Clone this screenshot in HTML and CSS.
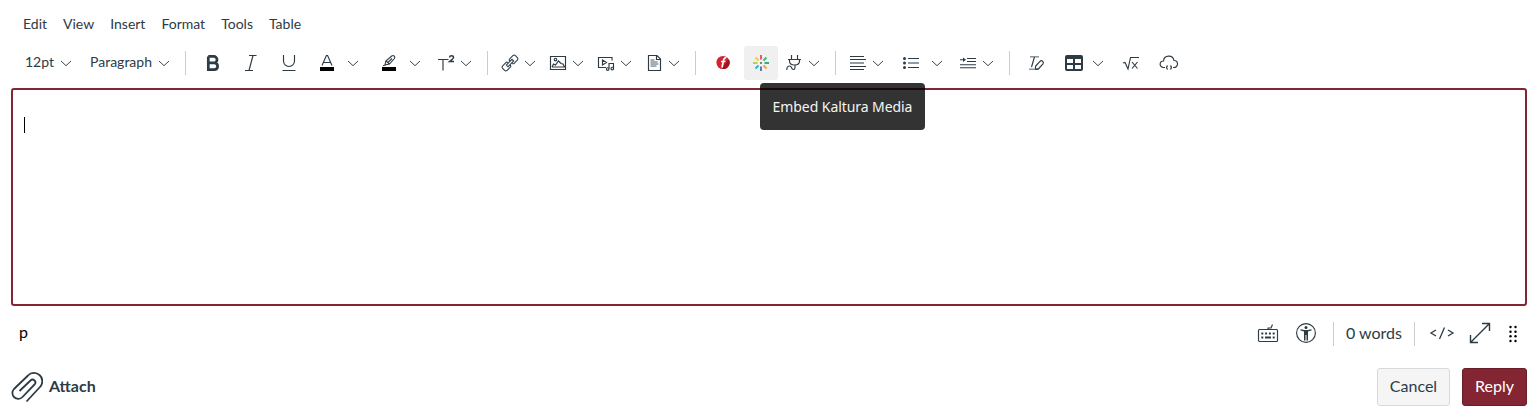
FILE: index.html
```html
<!DOCTYPE html>
<html lang="en">
<head>
<meta charset="utf-8">
<title>Reply editor</title>
<link rel="stylesheet" href="styles.css">
</head>
<body>
<svg class="defs" width="0" height="0"><defs><symbol id="chev" viewBox="0 0 12 20"><path d="M1 8l5 4.700 5-4.700"/></symbol></defs></svg>
<main class="editor">
  <nav class="menubar"><span>Edit</span><span>View</span><span>Insert</span><span>Format</span><span>Tools</span><span>Table</span></nav>
  <div class="toolbar">
    <div class="group group-type">
      <div class="select"><span>12pt</span><svg class="chev"><use href="#chev"/></svg></div>
      <div class="select"><span>Paragraph</span><svg class="chev"><use href="#chev"/></svg></div>
    </div>
    <div class="group group-style">
      <svg class="icon" viewBox="0 0 20 20"><path stroke-width="2.700" d="M5.300 3.400v13.200h6.500a3.400 3.400 0 0 0 0-6.700h-6.500M5.300 3.400h5.500a3.200 3.200 0 0 1 0 6.500"/></svg>
      <svg class="icon" viewBox="0 0 20 20"><path d="M8 2.500h7.500M4 17.500h8M12 2.500l-4 15"/></svg>
      <svg class="icon" viewBox="0 0 20 20"><path d="M4.500 2v6a5.500 5.500 0 0 0 11 0V2M3.500 17.500h13"/></svg>
      <div class="split wide">
        <svg class="icon" viewBox="0 0 20 20"><path d="M5 12.500l4.400-10h1.200l4.400 10M6.500 9.500h7"/><path class="solid black" d="M3 14h14v4H3z"/></svg>
        <svg class="chev"><use href="#chev"/></svg>
      </div>
      <div class="split wide highlight">
        <svg class="icon" viewBox="0 0 20 20"><path stroke-width="1.100" d="M6 12l.8-4 6-5q1.200-1 2.400 0t.2 2.500L10.500 11l-4.500 1M7 8l3.500 3M4 12.800l3-1M9 9.500l4-4"/><path class="solid black" d="M3 14h14v4H3z"/></svg>
        <svg class="chev"><use href="#chev"/></svg>
      </div>
      <div class="split script">
        <svg class="icon" viewBox="0 0 20 20"><path d="M2 6.500h10.500M7 6.500v11"/><path stroke-width="1.500" d="M13.500 4.500q.2-1.700 2-1.700 2 0 2 1.600 0 1-4 4.100H18"/></svg>
        <svg class="chev"><use href="#chev"/></svg>
      </div>
    </div>
    <div class="group group-insert">
      <div class="split">
        <svg class="icon" viewBox="0 0 20 20"><g transform="rotate(-45 10 10) translate(1 1) scale(.9)"><path d="M8.500 8V7.500Q8.500 6.500 7 6.500H2Q0 6.500 0 8.500v3q0 2 2 2h5q1.500 0 1.500-1.500M11.500 8q0-1.500 1.500-1.500h5q2 0 2 2v3q0 2-2 2h-5q-1.500 0-1.500-1.500M5.500 8.700h9v2.600h-9z"/></g></svg>
        <svg class="chev"><use href="#chev"/></svg>
      </div>
      <div class="split">
        <svg class="icon" viewBox="0 0 20 20"><path d="M2.500 3.500h15v13h-15zM4 14h12.500l-1.500-3-2-.5-2.500-2.500-3 4-2-1L4 14"/><circle cx="7.500" cy="6.500" r="1.300"/></svg>
        <svg class="chev"><use href="#chev"/></svg>
      </div>
      <div class="split">
        <svg class="icon" viewBox="0 0 20 20"><path d="M10 14.500H2.500v-10h13.500v3M6.500 7l4 2.500-4 2.500zM13 15.500v-5h4.500v5"/><circle cx="11.700" cy="16" r="1.300"/><circle cx="16.300" cy="15.500" r="1.300"/></svg>
        <svg class="chev"><use href="#chev"/></svg>
      </div>
      <div class="split">
        <svg class="icon" viewBox="0 0 20 20"><path d="M4.500 2.500H13l3.500 3.500v11.500h-12zM12.500 2.500v4h4"/><path class="faint" stroke-width="1.400" d="M6.500 7h4M6.500 9h7M6.500 11h8M6.500 13h6"/></svg>
        <svg class="chev"><use href="#chev"/></svg>
      </div>
    </div>
    <div class="group group-apps">
      <svg class="icon" viewBox="0 0 20 20"><circle cx="10" cy="9.500" r="6.600" fill="#cf2430" stroke="none"/><path d="M16 6.500A6.600 6.600 0 0 1 9 16L13 9z" fill="#9d1620" stroke="none"/><path d="M13.500 4.500Q11 4.500 10.500 7.500L9 14.500M8 8.500h4.500" stroke="#fff" stroke-width="1.700"/></svg>
      <div class="active">
        <svg class="icon" viewBox="0 0 20 20"><g stroke-width="2"><path stroke="#ed5961" d="M10 2v4.500"/><path stroke="#45b87c" d="M12.500 7.500l3-3"/><path stroke="#36ae76" d="M13.500 10H18"/><path stroke="#f6a43a" d="M12.500 12.500l3 3"/><path stroke="#557eb8" d="M10 13.500V18"/><path stroke="#2ab5d2" d="M7.500 12.500l-3 3"/><path stroke="#b5d33e" d="M2 10h4.500"/><path stroke="#f5cf25" d="M7.500 7.500l-3-3"/></g><path class="solid" d="M9.200 9.200h1.600v1.600H9.200z"/></svg>
        <div class="tooltip">Embed Kaltura Media</div>
      </div>
      <div class="split">
        <svg class="icon" viewBox="0 0 20 20"><path d="M7.500 2v4M13.500 2v4M4 6.500h13M5.500 6.500V8q0 4 5 4t5-4V6.500M11 12v2.500q0 2-1.500 2T7.500 14.500q-.5-1.500-2-1.500-2.700 0-2.700 4"/></svg>
        <svg class="chev"><use href="#chev"/></svg>
      </div>
    </div>
    <div class="group group-layout">
      <div class="split">
        <svg class="icon" viewBox="0 0 20 20"><path d="M2 3.500h14M2 6.500h16M2 10h14M2 13.500h16M2 16.500h14"/></svg>
        <svg class="chev"><use href="#chev"/></svg>
      </div>
      <div class="split wide">
        <svg class="icon" viewBox="0 0 20 20"><path d="M7 5.500h11M7 10h11M7 14.500h11"/><g class="solid"><circle cx="3.500" cy="5.500" r="1.500"/><circle cx="3.500" cy="10" r="1.500"/><circle cx="3.500" cy="14.500" r="1.500"/></g></svg>
        <svg class="chev"><use href="#chev"/></svg>
      </div>
      <div class="split indent">
        <svg class="icon" viewBox="0 0 20 20"><path d="M9 5.500h9M9 8.500h9M2 11.700h16M2 14.700h16M2 6.700h5"/><path class="solid" d="M5 4.500l3 2.200L5 9z"/></svg>
        <svg class="chev"><use href="#chev"/></svg>
      </div>
    </div>
    <div class="group group-more">
      <svg class="icon" viewBox="0 0 20 20"><path class="faint" stroke-width="1.500" d="M4 3.800h9M3 16.200h10"/><path d="M8.500 4L5.500 14M9.700 13l4.300-4.700q1.200-1.300 2.600-.1t.4 2.700L12.800 15.500q-1 .8-3 .8-.8-1.800-.1-3.300z"/></svg>
      <div class="split table">
        <svg class="icon" viewBox="0 0 20 20"><rect class="solid" x="1" y="2" width="18" height="16" rx="2"/><path fill="#fff" stroke="none" d="M3 6h6v4H3zM11 6h6v4h-6zM3 12h6v4H3zM11 12h6v4h-6z"/></svg>
        <svg class="chev"><use href="#chev"/></svg>
      </div>
      <svg class="icon" viewBox="0 0 20 20"><path d="M2 10l2-.5 3 6.500 2.500-11.500H18M11 9l5.500 6.500M16.500 9L11 15.500"/></svg>
      <svg class="icon" viewBox="0 0 20 20"><path d="M6 14.500H4.300A3.200 3.200 0 0 1 4.500 8a5.300 5.300 0 0 1 10.500-.5 3.500 3.500 0 0 1 0 7h-1M8.500 12.500q-1.800 2 0 4M11.500 12.500q1.800 2 0 4"/></svg>
    </div>
  </div>
  <div class="textarea"><span class="caret"></span></div>
  <div class="status">
    <span class="path">p</span>
    <div class="tools">
      <svg class="icon large" viewBox="0 0 22 22"><rect x="1.500" y="7.500" width="19" height="12" rx="1"/><path d="M11 7.500V6h3L15.500 2.500"/><path stroke-width="2" stroke-dasharray="2 1.800" d="M4.300 11.500h13.400"/><path stroke-width="2" d="M4.300 15.500h2M8 15.500h6M15.700 15.500h2"/></svg>
      <svg class="icon large" viewBox="0 0 22 22"><circle cx="11" cy="11" r="9.400"/><circle class="solid" cx="11" cy="5.500" r="1.500"/><path class="solid" d="M5.500 7.300l4 .7h3l4-.7v1.300l-3.500 1v9h-1.500V13h-1v5.600H9v-9l-3.500-1z"/></svg>
      <div class="words">0 words</div>
      <svg class="icon code" viewBox="0 0 26 22"><path stroke-width="1.300" d="M7 8L2 11l5 3M19 8l5 3-5 3M15.500 5.500l-5 11.500"/></svg>
      <svg class="icon large" viewBox="0 0 22 22"><path stroke-width="1.400" d="M1.500 20.500L20.500 1.500M13 1.500h7.500V9M1.500 13v7.500H9"/></svg>
      <svg class="icon dots" viewBox="0 0 10 20"><g class="solid black"><circle cx="2.500" cy="4" r="1.200"/><circle cx="7.500" cy="4" r="1.200"/><circle cx="2.500" cy="8.700" r="1.200"/><circle cx="7.500" cy="8.700" r="1.200"/><circle cx="2.500" cy="13.300" r="1.200"/><circle cx="7.500" cy="13.300" r="1.200"/><circle cx="2.500" cy="18" r="1.200"/><circle cx="7.500" cy="18" r="1.200"/></g></svg>
    </div>
  </div>
  <footer class="actions">
    <div class="attach"><svg class="icon clip" viewBox="0 0 32 32"><path stroke-width="1.800" d="M8.500 20L19.500 9.500a2.700 2.700 0 0 1 4 4L11.500 26a5.700 5.700 0 0 1-8.500-8L17 4.500a8 8 0 0 1 12 11.500L15.500 30.500"/></svg><span>Attach</span></div>
    <div class="buttons"><button class="btn cancel">Cancel</button><button class="btn reply">Reply</button></div>
  </footer>
</main>
</body>
</html>
```

FILE: styles.css
```css
* { box-sizing: border-box; }
body { margin: 0; background: #fff; color: #2d3b45; font-family: Lato, sans-serif; font-size: 14px; }
svg { display: block; flex: none; fill: none; stroke: #2d3b45; stroke-width: 1.15; }
.defs { position: absolute; }
.editor { width: 1540px; height: 418px; padding: 12px 13px 0 11px; }
.menubar { display: flex; gap: 16px; height: 24px; padding-left: 12px; line-height: 24px; }
.toolbar { display: flex; height: 52px; padding: 10px 0 8px; }
.group { display: flex; align-items: center; height: 34px; }
.group + .group::before { content: ""; width: 1px; height: 24px; background: #c7cdd1; margin-right: 12px; }
.group-type { width: 174px; padding-left: 14px; gap: 18px; }
.select { display: flex; align-items: center; gap: 6px; }
.select span { line-height: 20px; padding-bottom: 2px; }
.icon { width: 20px; height: 20px; }
.chev { width: 12px; height: 20px; stroke-width: .95; }
.solid { fill: #2d3b45; stroke: none; }
.black { fill: #000; }
.faint { stroke: #8b949a; }
.split { display: flex; gap: 4px; }
.split.wide { gap: 10px; }
.group-style { width: 302px; gap: 18px; }
.group.group-style::before { margin-right: -1px; }
.highlight { margin-left: 2px; }
.script { margin-left: -3px; }
.group-insert { width: 208px; gap: 12px; }
.group.group-insert::before { margin-right: 0; }
.group-apps { width: 140px; }
.group.group-apps::before { margin-right: 17px; }
.active { position: relative; display: flex; align-items: center; justify-content: center; width: 34px; height: 34px; margin: 0 6px 0 11px; background: #f0f0f0; border-radius: 3px; }
.tooltip { position: absolute; z-index: 2; left: 16px; top: 37px; width: 165px; height: 47px; border-radius: 4px; background: rgba(0,0,0,.8); color: #f5f5f5; font: 14px/47px "Noto Sans", sans-serif; letter-spacing: -.07px; text-align: center; white-space: nowrap; }
.group-layout { width: 174px; }
.indent { margin-left: 15px; }
.group-layout .wide { margin-left: 17px; }
.group-more { gap: 18px; }
.group.group-more::before { margin-right: -2px; }
.table { gap: 8px; }
.group-more .table + .icon { margin-left: -1px; }
.textarea { height: 218px; border: 2px solid #842533; border-radius: 3px; padding: 27px 11px; }
.caret { display: block; width: 1px; height: 16px; background: #000; }
.status { display: flex; justify-content: space-between; align-items: center; height: 56px; padding: 0 9px 2px 8px; font-size: 16px; }
.path { color: #000; padding-bottom: 3px; }
.tools { display: flex; align-items: center; }
.large { width: 22px; height: 22px; }
.large + .large { margin-left: 16px; }
.words { width: 82px; height: 24px; margin: 2px 14px 0 16px; border: solid #c7cdd1; border-width: 0 1px; line-height: 22px; text-align: center; }
.code { width: 26px; height: 22px; margin-right: 14px; }
.dots { width: 10px; height: 20px; margin-left: 17px; }
.actions { display: flex; justify-content: space-between; align-items: center; height: 38px; margin-top: 6px; font-size: 16px; }
.attach { display: flex; align-items: center; gap: 6px; font-weight: 700; }
.attach span { padding-bottom: 4px; }
.clip { width: 32px; height: 32px; }
.buttons { display: flex; gap: 12px; }
.btn { height: 38px; padding: 0 0 4px; border-radius: 3px; font: 16px Lato, sans-serif; }
.cancel { width: 73px; background: #f5f5f5; border: 1px solid #d8d9da; color: #2d3b45; }
.reply { width: 65px; background: #842533; border: 1px solid #691d29; color: #fff; }
```
